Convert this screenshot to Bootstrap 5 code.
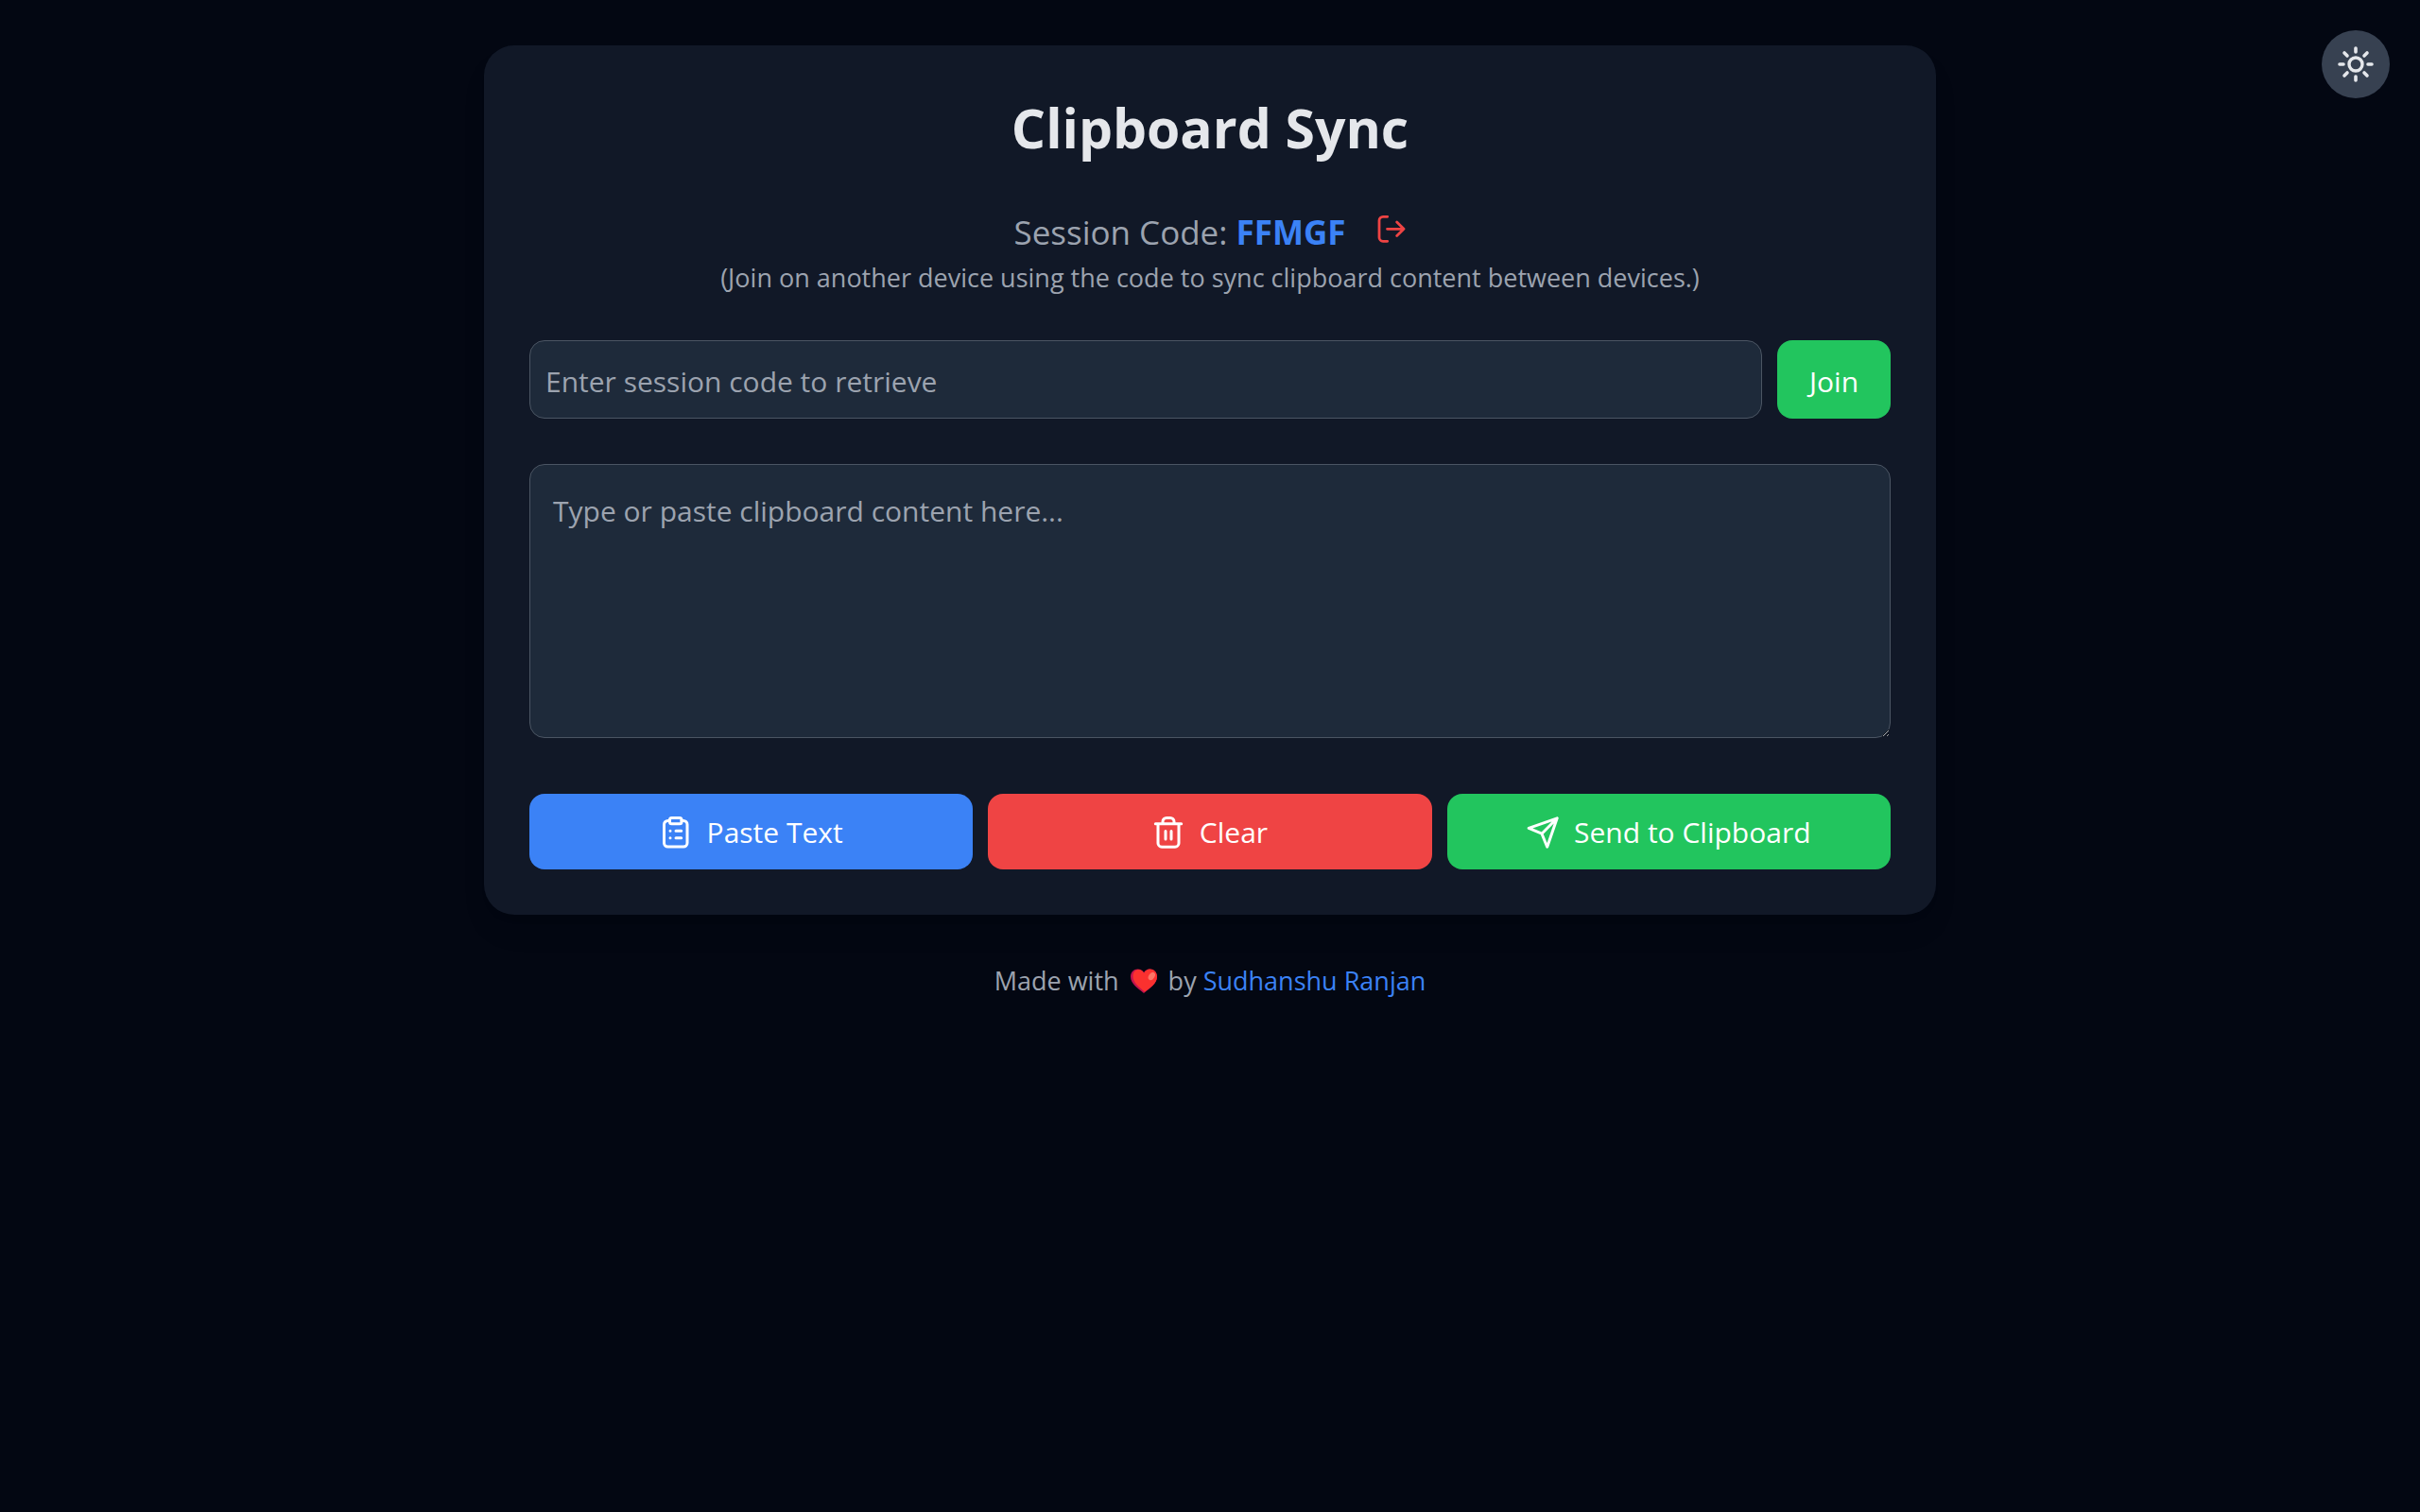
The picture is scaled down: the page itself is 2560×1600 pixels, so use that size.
<!DOCTYPE html>
<html lang="en">
<head>
<meta charset="utf-8">
<meta name="viewport" content="width=device-width, initial-scale=1">
<title>Clipboard Sync</title>
<link href="https://cdn.jsdelivr.net/npm/bootstrap@5.3.0/dist/css/bootstrap.min.css" rel="stylesheet">
<style>
  body { background: #030712; color: #9ca3af; font-family: "Open Sans", "Noto Sans", sans-serif; font-size: 30px; line-height: 48px; }
  a { color: #3b82f6; }
  .page-wrap { width: 60%; padding-top: 48px; }
  .panel { background: #111827; border-radius: 32px; padding: 48px; box-shadow: 0 20px 30px -6px rgba(0,0,0,.1), 0 8px 12px -8px rgba(0,0,0,.1); }
  .title { color: #e5e7eb; font-size: 57px; line-height: 78px; font-weight: 700; margin-bottom: 44px; }
  .session { font-size: 35px; line-height: 56px; }
  .session strong { color: #3b82f6; }
  .hint, .credit { font-size: 27px; line-height: 40px; }
  .hint { margin-bottom: 46px; }
  .leave { color: #ef4444; margin-left: 32px; margin-bottom: 8px; }
  .field.form-control { background: #1e2a3a; border: 1px solid #4b5563; border-radius: 16px; color: #e5e7eb; font-size: 30px; line-height: 48px; }
  .field::placeholder { color: #9ca3af; opacity: 1; }
  .code-field.form-control { padding: 19px 16px 14px; }
  .text-field.form-control { height: 290px; padding: 25px 24px; resize: vertical; }
  .join-row { gap: 16px; margin-bottom: 48px; }
  .actions { gap: 16px; margin-top: 59px; }
  .action.btn { border: 0; border-radius: 16px; color: #fff; font-size: 30px; line-height: 48px; padding: 17px 24px 15px; }
  .join.btn { min-width: 120px; padding-top: 19px; }
  .action.btn svg { width: 34px; height: 34px; margin-right: 16px; }
  .fill-green.btn { background: #22c55e; }
  .fill-blue.btn { background: #3b82f6; }
  .fill-red.btn { background: #ef4444; }
  .credit { margin-top: 50px; }
  .heart { margin: 0 8px; }
  .theme { top: 32px; right: 32px; width: 72px; height: 72px; background: #374151; color: #e5e7eb; }
  svg { fill: none; stroke: currentColor; stroke-width: 3; stroke-linecap: round; stroke-linejoin: round; flex: none; }
</style>
</head>
<body>
<button type="button" class="theme btn rounded-circle border-0 p-0 position-fixed d-flex align-items-center justify-content-center" aria-label="Toggle theme">
  <svg width="40" height="40" viewBox="-20 -20 40 40"><circle r="7" style="stroke-width:3.4"/><path d="M0-17v4M0 13V17M-17 0h4M13 0H17M-12-12l3 3M9 9 12 12M-12 12l3-3M9-9 12-12" style="stroke-width:3.6"/></svg>
</button>
<div class="page-wrap mx-auto">
  <main class="panel">
    <h1 class="title text-center">Clipboard Sync</h1>
    <div class="session d-flex justify-content-center align-items-center">
      <span>Session Code: <strong>FFMGF</strong></span>
      <button type="button" class="leave btn border-0 p-0 d-flex" aria-label="Leave session">
        <svg width="32" height="32" viewBox="0 0 32 32" style="stroke-width:2.800"><path d="M11.700 3.300H7a4 4 0 0 0-4 4v18a4 4 0 0 0 4 4h4.700M11.500 16.300H29M21.700 9l7.300 7.300-7.300 7.300"/></svg>
      </button>
    </div>
    <p class="hint text-center">(Join on another device using the code to sync clipboard content between devices.)</p>
    <form class="join-row d-flex">
      <input type="text" class="field code-field form-control" placeholder="Enter session code to retrieve" aria-label="Session code">
      <button type="button" class="action join fill-green btn">Join</button>
    </form>
    <textarea class="field text-field form-control" placeholder="Type or paste clipboard content here..." aria-label="Clipboard content"></textarea>
    <div class="actions d-flex">
      <button type="button" class="action fill-blue btn d-flex flex-fill w-100 align-items-center justify-content-center">
        <svg viewBox="0 0 34 34"><path d="M10.500 4.500h-2a4 4 0 0 0-4 4V28a4 4 0 0 0 4 4H25a4 4 0 0 0 4-4V8.500a4 4 0 0 0-4-4h-2M11 15.300h.01M11 22.700h.01M17 15.300h5.700M17 22.700h5.700"/><rect x="10.500" y="1.500" width="12.500" height="6.300" rx="2"/></svg>Paste Text
      </button>
      <button type="button" class="action fill-red btn d-flex flex-fill w-100 align-items-center justify-content-center">
        <svg viewBox="0 0 34 34"><path d="M3.300 7.700h27.400M11 7.700V5.500a4 4 0 0 1 4-4h4a4 4 0 0 1 4 4v2.200M6 7.700v20.500a4 4 0 0 0 4 4h14a4 4 0 0 0 4-4V7.700M14 15.500V24M20 15.500V24"/></svg>Clear
      </button>
      <button type="button" class="action fill-green btn d-flex flex-fill w-100 align-items-center justify-content-center">
        <svg viewBox="0 0 34 34"><path d="M32.200 1.800 2.200 12.400 16 18.200 21.700 32.200ZM16 18.200 32.200 1.800"/></svg>Send to Clipboard
      </button>
    </div>
  </main>
  <footer class="credit d-flex justify-content-center align-items-center">
    <span>Made with</span>
    <svg class="heart" width="36" height="26" viewBox="0 0 36 26" style="stroke:none" role="img" aria-label="love"><path fill="#c4134e" d="M18 26C12 21 4 16 4 8.500 4 3.500 7.500.5 11.500.5c2.800 0 5 1.300 6.500 3.500 1.500-2.200 3.700-3.500 6.500-3.500C28.500.5 32 3.500 32 8.500 32 16 24 21 18 26Z"/><path fill="#fa312f" d="M19 24.500C13 19.500 6.500 15 6.500 8 6.500 3.500 9.500 1 12.500 1c2.500 0 4.500 1.500 5.700 4 1.200-2.800 3.500-4.500 6.300-4.500C28.500.5 32 3.500 32 8.500 32 15.500 25 20 19 24.500Z"/><ellipse cx="26.300" cy="8" rx="3" ry="4.500" transform="rotate(35 26.300 8)" fill="#fb7566"/></svg>
    <span>by <a href="#" class="text-decoration-none">Sudhanshu Ranjan</a></span>
  </footer>
</div>
<script src="https://cdn.jsdelivr.net/npm/bootstrap@5.3.0/dist/js/bootstrap.bundle.min.js"></script>
</body>
</html>
